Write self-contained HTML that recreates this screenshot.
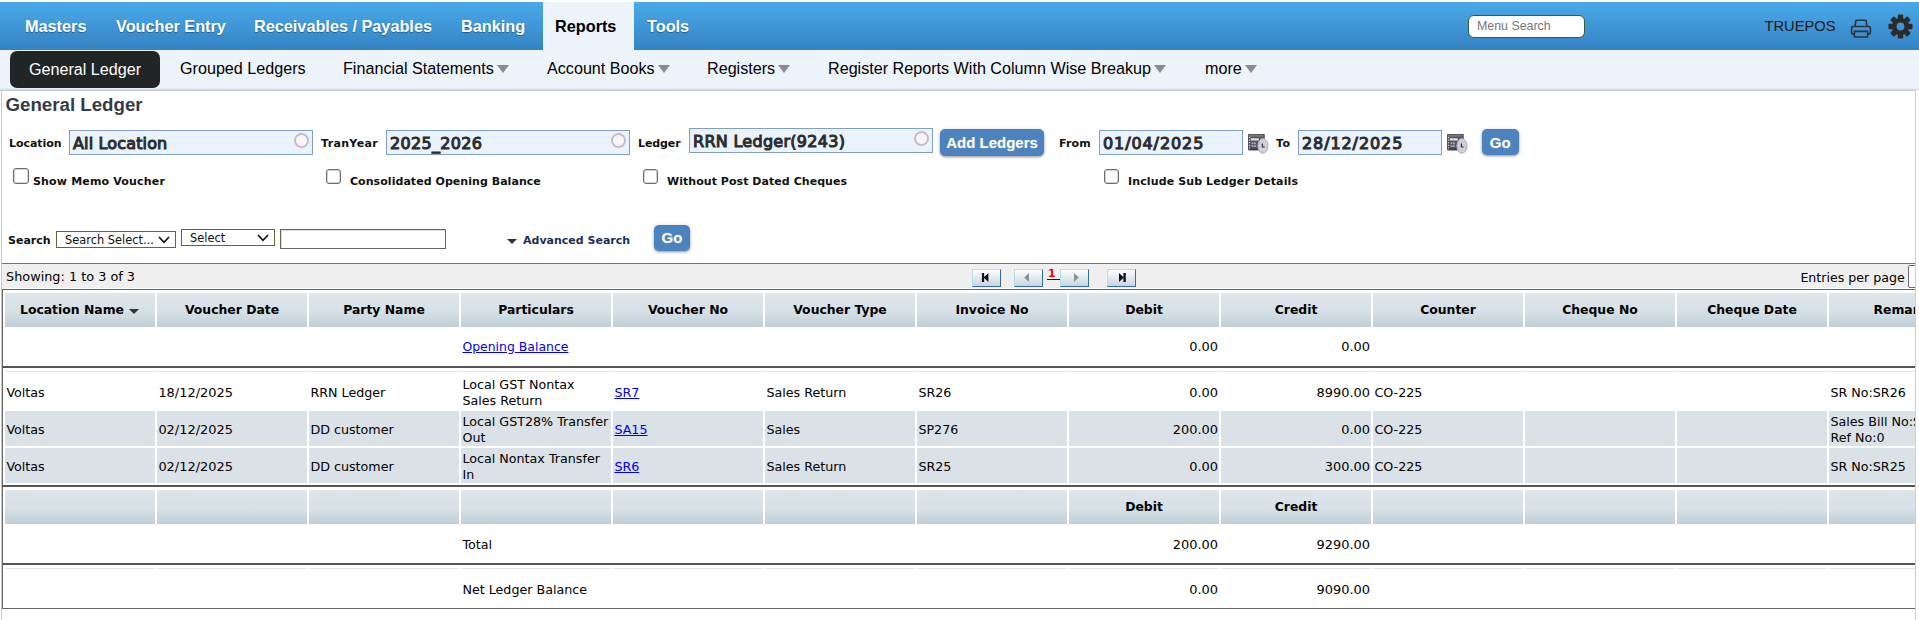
<!DOCTYPE html>
<html><head><meta charset="utf-8"><title>General Ledger</title>
<style>
*{box-sizing:border-box}
html,body{margin:0;padding:0;background:#fff;overflow:hidden}
body{width:1919px;height:620px;position:relative;font-family:"DejaVu Sans","Liberation Sans",sans-serif;color:#000}
.abs{position:absolute;white-space:nowrap}
#nav{position:absolute;left:0;top:2px;width:1919px;height:48px;background:linear-gradient(#4ba9e9,#3483c3)}
#nav .it{position:absolute;top:0;height:48px;line-height:48px;font:bold 16.25px/49px "Liberation Sans",sans-serif;color:#fff;text-shadow:0 1px 1px rgba(0,0,0,.35);white-space:nowrap}
#nav .act{background:#edf3fb;color:#000;text-shadow:none;padding-left:12px}
#sub{position:absolute;left:0;top:50px;width:1919px;height:41px;background:linear-gradient(#edf3fb,#edf3fb 38px,#dfe6ed 39px,#c4ccd2 40.5px,#c4ccd2)}
#sub .it{position:absolute;top:0;height:37px;font:16.15px/37px "Liberation Sans",sans-serif;color:#000;white-space:nowrap}
#sub .pill{background:#222526;color:#fff;border-radius:7px;text-align:center;top:1px;height:37px;line-height:36px}
.car{display:inline-block;width:0;height:0;border-left:6px solid transparent;border-right:6px solid transparent;border-top:8px solid #8d8a92;margin-left:3px;vertical-align:1px}
#lb{position:absolute;left:2px;top:90px;width:2px;height:530px;background:#b9b9b9}
#rb{position:absolute;left:1914px;top:90px;width:2px;height:530px;background:#c4c4c4}
.lbl{position:absolute;font:bold 11px/14px "DejaVu Sans",sans-serif;color:#111;white-space:nowrap}
.inp{position:absolute;height:25px;background:#eaf3fc;border:1px solid #7f9fc8;font:16px/25px "DejaVu Sans",sans-serif;color:#2c2c31;-webkit-text-stroke:1.05px #2c2c31;letter-spacing:.15px;padding-left:3px;white-space:nowrap;overflow:hidden}
.btn{position:absolute;background:#4c83be;color:#f7f7ec;border-radius:5px;font:bold 15px/28px "Liberation Sans",sans-serif;text-align:center;box-shadow:0 1px 3px rgba(0,0,0,.45);text-shadow:0 0 1px rgba(255,255,230,.5);white-space:nowrap}
.cb{position:absolute;width:15px;height:15px;border:1px solid #6f6a77;border-radius:3px;background:#fff;box-shadow:inset 0 0 0 1px rgba(111,106,119,.3)}
.ring{position:absolute;right:3px;top:2px;width:15px;height:15px;border:2px solid #c6bcc5;border-radius:50%;background:#f6f6f8}
.sel{position:absolute;border:1px solid #5a683c;background:#fff;font:11.4px/17px "DejaVu Sans",sans-serif;color:#111;padding-left:8px;white-space:nowrap}
.chev{position:absolute;right:5px;top:4px}
.t,.td{font:12.7px/16px "DejaVu Sans",sans-serif;color:#000;white-space:nowrap}
.td{position:absolute}
.lk{color:#0000ee;text-decoration:underline}
.th{position:absolute;width:150px;height:34px;background:linear-gradient(#dde5ea,#d6e0e6 55%,#c0ced7);font:bold 12.4px/33px "DejaVu Sans",sans-serif;text-align:center;color:#000;white-space:nowrap}
.sort{display:inline-block;width:0;height:0;border-left:5px solid transparent;border-right:5px solid transparent;border-top:5px solid #333;margin-left:5px;margin-right:-2px;vertical-align:0px}
.pb{position:absolute;top:269px;width:29px;height:18px;background:linear-gradient(#fdfeff,#c6d5de);border:1px solid;border-color:#b3dcec #356ca4 #356ca4 #b3dcec}
.pb svg{display:block}
#tb{position:absolute;left:0;top:0;width:1915px;height:620px;overflow:hidden}
</style></head><body>
<div id="nav">
 <div class="it" style="left:25px">Masters</div>
 <div class="it" style="left:116px">Voucher Entry</div>
 <div class="it" style="left:254px">Receivables / Payables</div>
 <div class="it" style="left:461px">Banking</div>
 <div class="it act" style="left:543px;width:91px">Reports</div>
 <div class="it" style="left:647px">Tools</div>
 <div class="abs" style="left:1468px;top:13px;width:117px;height:23px;background:#fff;border:1px solid #2f5d45;border-radius:6px;font:12.4px/20px 'Liberation Sans',sans-serif;color:#777;padding-left:8px">Menu Search</div>
 <div class="abs" style="left:1764.5px;top:0;font:14.7px/49px 'Liberation Sans',sans-serif;color:#1a1a1a">TRUEPOS</div>

 <svg class="abs" style="left:1849px;top:15px" width="24" height="24" viewBox="0 0 24 24" fill="none" stroke="#2a3340" stroke-width="1.6" stroke-linejoin="round"><path d="M6 9.5L7 3.2h10l1 6.3"/><rect x="2.6" y="9.5" width="18.8" height="7.6" rx="1.6"/><rect x="5.4" y="14.4" width="13.2" height="5.6" fill="#3f8fd0"/></svg>
 <svg class="abs" style="left:1888px;top:12px" width="25" height="25" viewBox="-12.5 -12.5 25 25"><g fill="#2b2b2b"><circle r="8.6"/><g id="t"><rect x="-2.7" y="-12" width="5.4" height="24" rx="1"/></g><use href="#t" transform="rotate(45)"/><use href="#t" transform="rotate(90)"/><use href="#t" transform="rotate(135)"/></g><circle r="3.9" fill="#3f93d6"/></svg>
</div>
<div id="sub">
 <div class="it pill" style="left:10px;width:150px">General Ledger</div>
 <div class="it" style="left:180px">Grouped Ledgers</div>
 <div class="it" style="left:343px">Financial Statements<span class="car"></span></div>
 <div class="it" style="left:547px">Account Books<span class="car"></span></div>
 <div class="it" style="left:707px">Registers<span class="car"></span></div>
 <div class="it" style="left:828px">Register Reports With Column Wise Breakup<span class="car"></span></div>
 <div class="it" style="left:1205px">more<span class="car"></span></div>
</div>
<div class="abs" style="left:1px;top:91px;width:1px;height:530px;background:#c9c9c9"></div>
<div class="abs" style="left:5.5px;top:94px;font:bold 18.7px/22px 'Liberation Sans',sans-serif;color:#353b47">General Ledger</div>


<!-- form row -->
<div class="lbl" style="left:9px;top:137px;letter-spacing:-0.05px">Location</div>
<div class="inp" style="left:69px;top:130px;width:244px">All Location<i class="ring"></i></div>
<div class="lbl" style="left:321px;top:137px;letter-spacing:0.34px">TranYear</div>
<div class="inp" style="left:386px;top:130px;width:244px"><span style="letter-spacing:.3px">2025_2026</span><i class="ring"></i></div>
<div class="lbl" style="left:638px;top:137px;letter-spacing:-0.1px">Ledger</div>
<div class="inp" style="left:689px;top:128px;width:244px"><span style="letter-spacing:.28px">RRN Ledger(9243)</span><i class="ring"></i></div>
<div class="btn" style="left:940px;top:129px;width:104px;height:27px">Add Ledgers</div>
<div class="lbl" style="left:1059px;top:137px;letter-spacing:0.18px">From</div>
<div class="inp" style="left:1099px;top:130px;width:144px"><span style="letter-spacing:.9px">01/04/2025</span></div>
<svg class="abs" style="left:1247px;top:132px" width="22" height="24" viewBox="0 0 22 24"><rect x="1" y="2" width="16.8" height="16.5" rx="1" fill="#55565b"/><path d="M2.6 3.9h13.6" stroke="#c9c9e6" stroke-width="1" stroke-dasharray="1 1"/><path d="M2.6 5v12" stroke="#f0f0f6" stroke-width="1" stroke-dasharray="1 1.6"/><rect x="3.8" y="6.3" width="8" height="2.2" fill="#e4e4ec"/><g fill="#a9a9c4"><rect x="4.6" y="10.4" width="1.8" height="1.8"/><rect x="7" y="10.4" width="1.8" height="1.8"/><rect x="4.6" y="13.2" width="1.8" height="1.8"/><rect x="7" y="13.2" width="1.8" height="1.8"/></g><rect x="3" y="16.2" width="8" height="1.6" fill="#3b3e46"/><ellipse cx="15.9" cy="13.9" rx="5" ry="7.4" fill="#d0d0d6" stroke="#a9a9d2" stroke-width="1"/><path d="M15.4 11.4v3.6h2.3" fill="none" stroke="#33333a" stroke-width="1.2"/></svg>
<div class="lbl" style="left:1276px;top:137px;letter-spacing:0.45px">To</div>
<div class="inp" style="left:1298px;top:130px;width:144px"><span style="letter-spacing:.9px">28/12/2025</span></div>
<svg class="abs" style="left:1446px;top:132px" width="22" height="24" viewBox="0 0 22 24"><rect x="1" y="2" width="16.8" height="16.5" rx="1" fill="#55565b"/><path d="M2.6 3.9h13.6" stroke="#c9c9e6" stroke-width="1" stroke-dasharray="1 1"/><path d="M2.6 5v12" stroke="#f0f0f6" stroke-width="1" stroke-dasharray="1 1.6"/><rect x="3.8" y="6.3" width="8" height="2.2" fill="#e4e4ec"/><g fill="#a9a9c4"><rect x="4.6" y="10.4" width="1.8" height="1.8"/><rect x="7" y="10.4" width="1.8" height="1.8"/><rect x="4.6" y="13.2" width="1.8" height="1.8"/><rect x="7" y="13.2" width="1.8" height="1.8"/></g><rect x="3" y="16.2" width="8" height="1.6" fill="#3b3e46"/><ellipse cx="15.9" cy="13.9" rx="5" ry="7.4" fill="#d0d0d6" stroke="#a9a9d2" stroke-width="1"/><path d="M15.4 11.4v3.6h2.3" fill="none" stroke="#33333a" stroke-width="1.2"/></svg>
<div class="btn" style="left:1482px;top:129px;width:36.5px;height:26px;line-height:27px">Go</div>
<!-- checkboxes -->
<div class="cb" style="left:13px;top:168px;width:16px;height:16px"></div><div class="lbl" style="left:33px;top:175px;letter-spacing:0.17px">Show Memo Voucher</div>
<div class="cb" style="left:326px;top:169px"></div><div class="lbl" style="left:350px;top:175px;letter-spacing:0.05px">Consolidated Opening Balance</div>
<div class="cb" style="left:643px;top:169px"></div><div class="lbl" style="left:667px;top:175px;letter-spacing:0.05px">Without Post Dated Cheques</div>
<div class="cb" style="left:1104px;top:169px"></div><div class="lbl" style="left:1128px;top:175px;letter-spacing:0.12px">Include Sub Ledger Details</div>
<!-- search row -->
<div class="lbl" style="left:8px;top:234px;letter-spacing:0px">Search</div>
<div class="sel" style="left:56px;top:231px;width:120px;height:17px">Search Select...<svg class="chev" width="12" height="8" viewBox="0 0 12 8"><path d="M1 1l5 5.3 5-5.3" fill="none" stroke="#111" stroke-width="1.7"/></svg></div>
<div class="sel" style="left:181px;top:229px;width:94px;height:17px">Select<svg class="chev" width="12" height="8" viewBox="0 0 12 8"><path d="M1 1l5 5.3 5-5.3" fill="none" stroke="#111" stroke-width="1.7"/></svg></div>
<div class="abs" style="left:280px;top:229px;width:166px;height:20px;border:1px solid #666;background:#fff;box-shadow:inset 1px 1px 0 #ddd"></div>
<div class="abs" style="left:507px;top:239px;width:0;height:0;border-left:5px solid transparent;border-right:5px solid transparent;border-top:5px solid #333"></div>
<div class="lbl" style="left:523px;top:234px;color:#1c2f57;letter-spacing:0px">Advanced Search</div>
<div class="btn" style="left:654px;top:225px;width:36px;height:26px;line-height:26px">Go</div>

<!-- pager bar -->
<div class="abs" style="left:2px;top:263px;width:1913px;height:1px;background:#4a7aae"></div>
<div class="abs" style="left:2px;top:264px;width:1913px;height:24px;background:#efefef"></div>
<div class="abs t" style="left:6px;top:269px;font-size:12.85px">Showing: 1 to 3 of 3</div>
<div class="pb" style="left:972px"><svg width="27" height="16" viewBox="0 0 27 16"><path d="M8.9 3h2.2v9h-2.2zM10.6 7.5l4.8-4.5v9z" fill="#111"/></svg></div>
<div class="pb" style="left:1014px"><svg width="27" height="16" viewBox="0 0 27 16"><path d="M9.2 7.5l4.8-4.5v9z" fill="#8e8e8e"/></svg></div>
<div class="abs" style="left:1047px;top:266px;width:13px;height:14px;border-bottom:1px solid #0000ee;font:bold 11px/16px 'DejaVu Sans',sans-serif;color:#f00;padding-left:1px">1</div>
<div class="pb" style="left:1060px"><svg width="27" height="16" viewBox="0 0 27 16"><path d="M17.8 7.5l-4.8-4.5v9z" fill="#8e8e8e"/></svg></div>
<div class="pb" style="left:1107px"><svg width="27" height="16" viewBox="0 0 27 16"><path d="M15.4 3h2.4v9h-2.4zM15.8 7.5l-4.8-4.5v9z" fill="#111"/></svg></div>
<div class="abs t" style="left:1800.4px;top:270px;font-size:12.6px">Entries per page</div>
<div class="abs" style="left:1908px;top:265px;width:20px;height:23px;border:1px solid #6f6a70;border-radius:2px;background:#fff;font:12px/20px 'DejaVu Sans',sans-serif;color:#222;padding-left:5.4px">10</div>

<!-- table -->
<div id="tb">
<div class="abs" style="left:2px;top:289px;width:1990px;height:1px;background:#666"></div>
<div class="abs" style="left:2px;top:289px;width:1px;height:320px;background:#666"></div>
<div class="abs" style="left:2px;top:608px;width:1990px;height:1px;background:#666"></div>
<div class="abs" style="left:2px;top:366px;width:1990px;height:2px;background:#555"></div>
<div class="abs" style="left:2px;top:485px;width:1990px;height:2px;background:#555"></div>
<div class="abs" style="left:2px;top:563px;width:1990px;height:2px;background:#555"></div>
<div class="th" style="left:5px;top:293px"><span style="margin-left:-3px">Location Name</span><i class="sort"></i></div>
<div class="th" style="left:5px;top:490px"></div>
<div class="abs" style="left:5px;top:371px;width:150px;height:1px;background:#dde6ec"></div>
<div class="abs" style="left:5px;top:568px;width:150px;height:1px;background:#dde6ec"></div>
<div class="abs" style="left:5px;top:411px;width:150px;height:35px;background:#dae2e8"></div>
<div class="abs" style="left:5px;top:448px;width:150px;height:35px;background:#dae2e8"></div>
<div class="th" style="left:157px;top:293px">Voucher Date</div>
<div class="th" style="left:157px;top:490px"></div>
<div class="abs" style="left:157px;top:371px;width:150px;height:1px;background:#dde6ec"></div>
<div class="abs" style="left:157px;top:568px;width:150px;height:1px;background:#dde6ec"></div>
<div class="abs" style="left:157px;top:411px;width:150px;height:35px;background:#dae2e8"></div>
<div class="abs" style="left:157px;top:448px;width:150px;height:35px;background:#dae2e8"></div>
<div class="th" style="left:309px;top:293px">Party Name</div>
<div class="th" style="left:309px;top:490px"></div>
<div class="abs" style="left:309px;top:371px;width:150px;height:1px;background:#dde6ec"></div>
<div class="abs" style="left:309px;top:568px;width:150px;height:1px;background:#dde6ec"></div>
<div class="abs" style="left:309px;top:411px;width:150px;height:35px;background:#dae2e8"></div>
<div class="abs" style="left:309px;top:448px;width:150px;height:35px;background:#dae2e8"></div>
<div class="th" style="left:461px;top:293px">Particulars</div>
<div class="th" style="left:461px;top:490px"></div>
<div class="abs" style="left:461px;top:371px;width:150px;height:1px;background:#dde6ec"></div>
<div class="abs" style="left:461px;top:568px;width:150px;height:1px;background:#dde6ec"></div>
<div class="abs" style="left:461px;top:411px;width:150px;height:35px;background:#dae2e8"></div>
<div class="abs" style="left:461px;top:448px;width:150px;height:35px;background:#dae2e8"></div>
<div class="th" style="left:613px;top:293px">Voucher No</div>
<div class="th" style="left:613px;top:490px"></div>
<div class="abs" style="left:613px;top:371px;width:150px;height:1px;background:#dde6ec"></div>
<div class="abs" style="left:613px;top:568px;width:150px;height:1px;background:#dde6ec"></div>
<div class="abs" style="left:613px;top:411px;width:150px;height:35px;background:#dae2e8"></div>
<div class="abs" style="left:613px;top:448px;width:150px;height:35px;background:#dae2e8"></div>
<div class="th" style="left:765px;top:293px">Voucher Type</div>
<div class="th" style="left:765px;top:490px"></div>
<div class="abs" style="left:765px;top:371px;width:150px;height:1px;background:#dde6ec"></div>
<div class="abs" style="left:765px;top:568px;width:150px;height:1px;background:#dde6ec"></div>
<div class="abs" style="left:765px;top:411px;width:150px;height:35px;background:#dae2e8"></div>
<div class="abs" style="left:765px;top:448px;width:150px;height:35px;background:#dae2e8"></div>
<div class="th" style="left:917px;top:293px">Invoice No</div>
<div class="th" style="left:917px;top:490px"></div>
<div class="abs" style="left:917px;top:371px;width:150px;height:1px;background:#dde6ec"></div>
<div class="abs" style="left:917px;top:568px;width:150px;height:1px;background:#dde6ec"></div>
<div class="abs" style="left:917px;top:411px;width:150px;height:35px;background:#dae2e8"></div>
<div class="abs" style="left:917px;top:448px;width:150px;height:35px;background:#dae2e8"></div>
<div class="th" style="left:1069px;top:293px">Debit</div>
<div class="th" style="left:1069px;top:490px">Debit</div>
<div class="abs" style="left:1069px;top:371px;width:150px;height:1px;background:#dde6ec"></div>
<div class="abs" style="left:1069px;top:568px;width:150px;height:1px;background:#dde6ec"></div>
<div class="abs" style="left:1069px;top:411px;width:150px;height:35px;background:#dae2e8"></div>
<div class="abs" style="left:1069px;top:448px;width:150px;height:35px;background:#dae2e8"></div>
<div class="th" style="left:1221px;top:293px">Credit</div>
<div class="th" style="left:1221px;top:490px">Credit</div>
<div class="abs" style="left:1221px;top:371px;width:150px;height:1px;background:#dde6ec"></div>
<div class="abs" style="left:1221px;top:568px;width:150px;height:1px;background:#dde6ec"></div>
<div class="abs" style="left:1221px;top:411px;width:150px;height:35px;background:#dae2e8"></div>
<div class="abs" style="left:1221px;top:448px;width:150px;height:35px;background:#dae2e8"></div>
<div class="th" style="left:1373px;top:293px">Counter</div>
<div class="th" style="left:1373px;top:490px"></div>
<div class="abs" style="left:1373px;top:371px;width:150px;height:1px;background:#dde6ec"></div>
<div class="abs" style="left:1373px;top:568px;width:150px;height:1px;background:#dde6ec"></div>
<div class="abs" style="left:1373px;top:411px;width:150px;height:35px;background:#dae2e8"></div>
<div class="abs" style="left:1373px;top:448px;width:150px;height:35px;background:#dae2e8"></div>
<div class="th" style="left:1525px;top:293px">Cheque No</div>
<div class="th" style="left:1525px;top:490px"></div>
<div class="abs" style="left:1525px;top:371px;width:150px;height:1px;background:#dde6ec"></div>
<div class="abs" style="left:1525px;top:568px;width:150px;height:1px;background:#dde6ec"></div>
<div class="abs" style="left:1525px;top:411px;width:150px;height:35px;background:#dae2e8"></div>
<div class="abs" style="left:1525px;top:448px;width:150px;height:35px;background:#dae2e8"></div>
<div class="th" style="left:1677px;top:293px">Cheque Date</div>
<div class="th" style="left:1677px;top:490px"></div>
<div class="abs" style="left:1677px;top:371px;width:150px;height:1px;background:#dde6ec"></div>
<div class="abs" style="left:1677px;top:568px;width:150px;height:1px;background:#dde6ec"></div>
<div class="abs" style="left:1677px;top:411px;width:150px;height:35px;background:#dae2e8"></div>
<div class="abs" style="left:1677px;top:448px;width:150px;height:35px;background:#dae2e8"></div>
<div class="th" style="left:1829px;top:293px">Remarks</div>
<div class="th" style="left:1829px;top:490px"></div>
<div class="abs" style="left:1829px;top:371px;width:150px;height:1px;background:#dde6ec"></div>
<div class="abs" style="left:1829px;top:568px;width:150px;height:1px;background:#dde6ec"></div>
<div class="abs" style="left:1829px;top:411px;width:150px;height:35px;background:#dae2e8"></div>
<div class="abs" style="left:1829px;top:448px;width:150px;height:35px;background:#dae2e8"></div>
<div class="td" style="left:462.4px;top:338.5px"><span class="lk" style="font-size:12.45px">Opening Balance</span></div>
<div class="td" style="left:1069px;top:338.5px;width:149px;text-align:right;font-size:12.95px">0.00</div>
<div class="td" style="left:1221px;top:338.5px;width:149px;text-align:right;font-size:12.95px">0.00</div>
<div class="td" style="left:6.4px;top:384.5px">Voltas</div>
<div class="td" style="left:158.4px;top:384.5px;font-size:12.95px">18/12/2025</div>
<div class="td" style="left:310.4px;top:384.5px">RRN Ledger</div>
<div class="td" style="left:462.4px;top:376.5px">Local GST Nontax<br>Sales Return</div>
<div class="td" style="left:614.4px;top:384.5px"><span class="lk">SR7</span></div>
<div class="td" style="left:766.4px;top:384.5px">Sales Return</div>
<div class="td" style="left:918.4px;top:384.5px">SR26</div>
<div class="td" style="left:1069px;top:384.5px;width:149px;text-align:right;font-size:12.95px">0.00</div>
<div class="td" style="left:1221px;top:384.5px;width:149px;text-align:right;font-size:12.95px">8990.00</div>
<div class="td" style="left:1374.4px;top:384.5px">CO-225</div>
<div class="td" style="left:1830.4px;top:384.5px">SR No:SR26</div>
<div class="td" style="left:6.4px;top:421.5px">Voltas</div>
<div class="td" style="left:158.4px;top:421.5px;font-size:12.95px">02/12/2025</div>
<div class="td" style="left:310.4px;top:421.5px">DD customer</div>
<div class="td" style="left:462.4px;top:413.5px">Local GST28% Transfer<br>Out</div>
<div class="td" style="left:614.4px;top:421.5px"><span class="lk">SA15</span></div>
<div class="td" style="left:766.4px;top:421.5px">Sales</div>
<div class="td" style="left:918.4px;top:421.5px">SP276</div>
<div class="td" style="left:1069px;top:421.5px;width:149px;text-align:right;font-size:12.95px">200.00</div>
<div class="td" style="left:1221px;top:421.5px;width:149px;text-align:right;font-size:12.95px">0.00</div>
<div class="td" style="left:1374.4px;top:421.5px">CO-225</div>
<div class="td" style="left:1830.4px;top:413.5px">Sales Bill No:SP276<br>Ref No:0</div>
<div class="td" style="left:6.4px;top:458.5px">Voltas</div>
<div class="td" style="left:158.4px;top:458.5px;font-size:12.95px">02/12/2025</div>
<div class="td" style="left:310.4px;top:458.5px">DD customer</div>
<div class="td" style="left:462.4px;top:450.5px">Local Nontax Transfer<br>In</div>
<div class="td" style="left:614.4px;top:458.5px"><span class="lk">SR6</span></div>
<div class="td" style="left:766.4px;top:458.5px">Sales Return</div>
<div class="td" style="left:918.4px;top:458.5px">SR25</div>
<div class="td" style="left:1069px;top:458.5px;width:149px;text-align:right;font-size:12.95px">0.00</div>
<div class="td" style="left:1221px;top:458.5px;width:149px;text-align:right;font-size:12.95px">300.00</div>
<div class="td" style="left:1374.4px;top:458.5px">CO-225</div>
<div class="td" style="left:1830.4px;top:458.5px">SR No:SR25</div>
<div class="td" style="left:462.4px;top:536.5px">Total</div>
<div class="td" style="left:1069px;top:536.5px;width:149px;text-align:right;font-size:12.95px">200.00</div>
<div class="td" style="left:1221px;top:536.5px;width:149px;text-align:right;font-size:12.95px">9290.00</div>
<div class="td" style="left:462.4px;top:581.5px">Net Ledger Balance</div>
<div class="td" style="left:1069px;top:581.5px;width:149px;text-align:right;font-size:12.95px">0.00</div>
<div class="td" style="left:1221px;top:581.5px;width:149px;text-align:right;font-size:12.95px">9090.00</div>
</div>
<div class="abs" style="left:1915px;top:90px;width:1px;height:530px;background:#cfcfcf"></div>
<div class="abs" style="left:1916px;top:90px;width:3px;height:530px;background:#fff"></div>
</body></html>
